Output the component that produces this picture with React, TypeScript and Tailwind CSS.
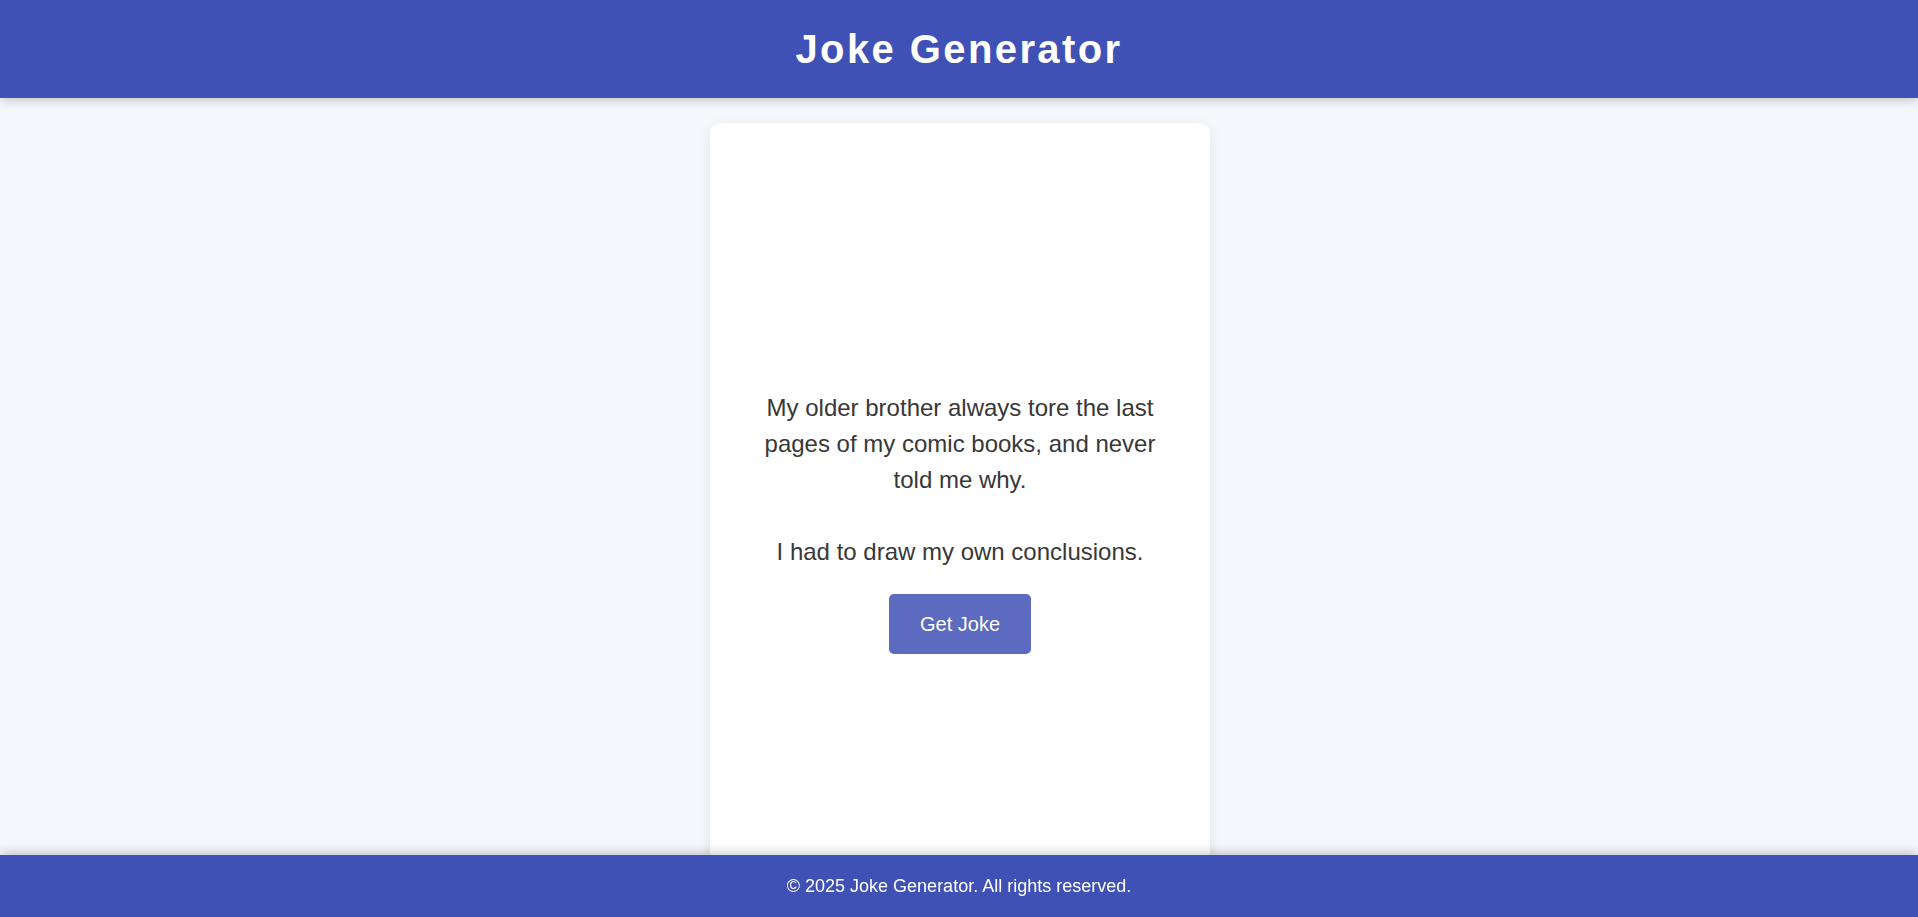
import React, { useState } from "react";

const jokes = [
  "My older brother always tore the last pages of my comic books, and never told me why.\n\nI had to draw my own conclusions.",
  "I told my wife she was drawing her eyebrows too high.\n\nShe looked surprised.",
];

const App = () => {
  const [index, setIndex] = useState(0);

  return (
    <div
      className="min-h-screen bg-[#f4f7fb] text-[#333]"
      style={{ fontFamily: '"Liberation Sans", Arial, sans-serif' }}
    >
      <header className="relative z-10 h-[98px] bg-[#3f51b5] flex items-center justify-center shadow-[0_2px_10px_rgba(0,0,0,0.22)]">
        <h1 className="text-white text-[40px] font-bold tracking-[2.4px]">
          Joke Generator
        </h1>
      </header>

      <main className="flex justify-center pt-[25px] pl-[2px]">
        <div className="w-[500px] h-[797px] bg-white rounded-[10px] shadow-[0_4px_14px_rgba(0,0,0,0.08)] px-[48px] flex flex-col items-center justify-center">
          <p className="text-[24px] leading-[36px] text-center whitespace-pre-line text-[#383838]">
            {jokes[index]}
          </p>
          <button
            onClick={() => setIndex((index + 1) % jokes.length)}
            className="mt-[24px] w-[142px] h-[60px] rounded-[5px] bg-[#5c6bc0] text-white text-[20px] hover:bg-[#3f51b5] transition-all"
          >
            Get Joke
          </button>
        </div>
      </main>

      <footer className="fixed bottom-0 left-0 right-0 z-10 h-[62px] bg-[#3f51b5] flex items-center justify-center shadow-[0_-2px_10px_rgba(0,0,0,0.22)]">
        <p className="text-white text-[18px]">
          © 2025 Joke Generator. All rights reserved.
        </p>
      </footer>
    </div>
  );
};

export default App;
